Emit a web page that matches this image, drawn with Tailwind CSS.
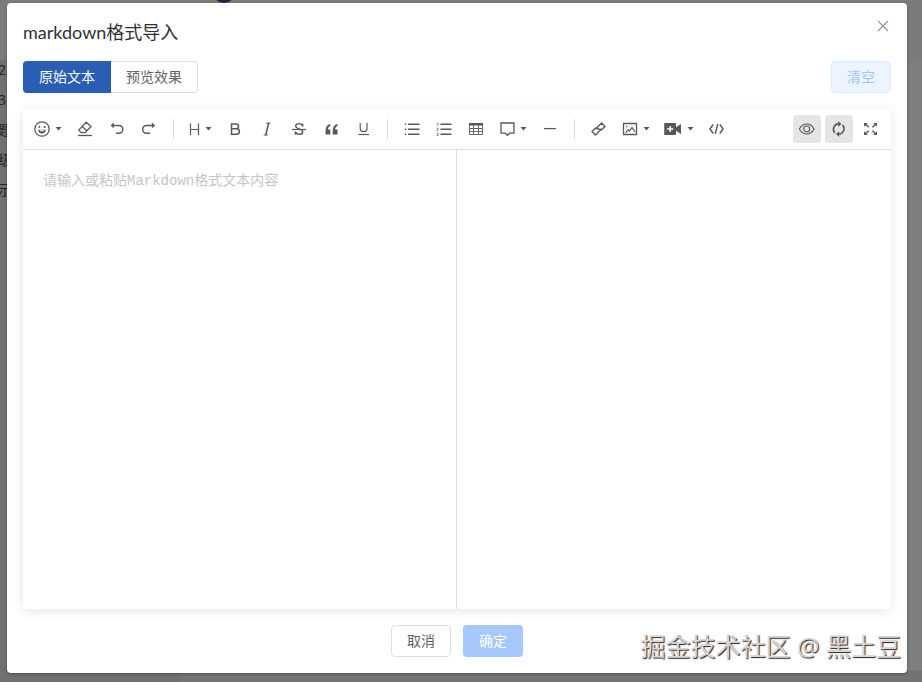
<!DOCTYPE html>
<html lang="zh-CN">
<head>
<meta charset="utf-8">
<meta name="viewport" content="width=device-width, initial-scale=1">
<title>markdown格式导入</title>
<script src="https://cdn.jsdelivr.net/npm/@tailwindcss/browser@4"></script>
</head>
<body class="relative h-screen overflow-hidden bg-[#7e7e7e] font-['Open_Sans','Noto_Sans_CJK_SC',sans-serif] text-sm text-[#606266]">

<!-- dimmed page behind the dialog -->
<div aria-hidden="true" class="absolute inset-0 overflow-hidden text-[#222326]">
  <div class="absolute inset-y-0 left-0 w-[180px] bg-[#6f7072]"></div>
  <div class="absolute inset-x-0 top-0 h-[60px] bg-[#7b7b7c]"></div>
  <div class="absolute inset-x-0 bottom-0 left-[180px] h-[12px] bg-[#737373]"></div>
  <div class="absolute -top-[19px] left-[213px] size-[22px] rounded-full bg-[#17294a]"></div>
  <div class="absolute top-[55px] -left-0.5 flex flex-col leading-[30px] whitespace-nowrap">
    <span>2</span><span>3</span><span>题</span><span>级标</span><span>示</span>
  </div>
</div>

<div class="relative flex h-full pt-[3px] pr-[15px] pb-[9px] pl-[7px]">
<section role="dialog" aria-labelledby="title" class="flex min-w-0 flex-1 flex-col rounded bg-white p-4 shadow-[0_1px_3px_rgba(0,0,0,0.3)]">
  <header class="flex h-[26px] items-center justify-between">
    <h1 id="title" class="font-['Lato','Noto_Sans_CJK_SC',sans-serif] text-lg leading-6 text-[#303133]">markdown格式导入</h1>
    <button type="button" aria-label="关闭" class="flex size-4 -translate-y-1.5 items-center justify-center text-[#909399]">
      <svg class="size-3" viewBox="0 0 12 12" fill="none" stroke="currentColor" stroke-width="1.1"><path d="M1 1l10 10M11 1L1 11"/></svg>
    </button>
  </header>

  <div class="mt-4 flex items-center justify-between">
    <div class="flex">
      <button type="button" class="h-8 w-[88px] rounded-l bg-[#2a5db4] text-white">原始文本</button>
      <button type="button" class="h-8 w-[87px] rounded-r border border-l-0 border-[#dcdfe6] bg-white">预览效果</button>
    </div>
    <button type="button" class="h-8 w-[60px] rounded border border-[#d9ecff] bg-[#ecf5ff] text-[#a3c5f5]">清空</button>
  </div>

  <div class="mt-4 flex min-h-0 flex-1 flex-col rounded shadow-[0_2px_12px_rgba(0,0,0,0.1)]">
    <div role="toolbar" aria-label="编辑工具" class="flex h-[41px] items-center justify-between border-b border-[#dddddd] px-1.5 text-[#595959]">
      <div class="flex items-center gap-1">
        <button type="button" aria-label="表情" class="flex h-7 items-center gap-[5px] px-[5px]">
          <svg class="size-4" viewBox="0 0 16 16" fill="none" stroke="currentColor" stroke-width="1.3"><circle cx="8" cy="8" r="7.200"/><path d="M4.300 8.800h7.400a3.700 3.700 0 0 1-7.400 0z" fill="currentColor" stroke="none"/><path d="M6 9.200h4v1H6z" fill="#fff" stroke="none"/><circle cx="5.400" cy="6" r="1" fill="currentColor" stroke="none"/><circle cx="10.600" cy="6" r="1" fill="currentColor" stroke="none"/></svg>
          <svg class="h-1 w-[7px]" viewBox="0 0 7 4" fill="currentColor"><path d="M.5 0h6L3.500 3.500z"/></svg>
        </button>
        <button type="button" aria-label="清除格式" class="flex size-7 items-center justify-center">
          <svg class="size-4" viewBox="0 0 16 16" fill="none" stroke="currentColor" stroke-width="1.300" stroke-linejoin="round"><path d="M9.200 1.200l4.900 4.300-6.200 6.200H4.400L1.700 9.100zM5.200 5.600l4.900 4.300"/><path d="M1 14.500h14"/></svg>
        </button>
        <button type="button" aria-label="撤销" class="flex size-7 items-center justify-center">
          <svg class="size-4" viewBox="0 0 16 16" fill="none" stroke="currentColor" stroke-width="1.500"><path d="M3.500 4.400h6.400a3.900 3.900 0 0 1 0 7.900H7"/><path d="M1.500 4.400L4.800 1.600v5.600z" fill="currentColor" stroke="none"/></svg>
        </button>
        <button type="button" aria-label="重做" class="flex size-7 items-center justify-center">
          <svg class="size-4" viewBox="0 0 16 16" fill="none" stroke="currentColor" stroke-width="1.500"><path d="M11.500 4.400H5.600a3.900 3.900 0 0 0 0 7.900H9"/><path d="M14.200 4.400L10.900 1.600v5.600z" fill="currentColor" stroke="none"/></svg>
        </button>
        <span class="mx-1.5 h-5 w-px bg-[#d9d9d9]"></span>
        <button type="button" aria-label="标题" class="flex h-7 items-center gap-[5px] px-[5px]">
          <svg class="h-4 w-[11px]" viewBox="0 0 11 16" fill="none" stroke="currentColor" stroke-width="1.200"><path d="M1.500 2.500v11.500M9.500 2.500v11.500M1.500 8.500h8"/></svg>
          <svg class="h-1 w-[7px]" viewBox="0 0 7 4" fill="currentColor"><path d="M.5 0h6L3.500 3.500z"/></svg>
        </button>
        <button type="button" aria-label="粗体" class="flex size-7 items-center justify-center">
          <svg class="size-4" viewBox="0 0 16 16" fill="none" stroke="currentColor" stroke-width="1.500"><path d="M4.500 3h4.600a2.400 2.400 0 0 1 0 4.800H4.500M4.500 7.800h5.200a2.700 2.700 0 0 1 0 5.400H4.500M4.500 2.200V14"/></svg>
        </button>
        <button type="button" aria-label="斜体" class="flex size-7 items-center justify-center">
          <svg class="size-4" viewBox="0 0 16 16" fill="none" stroke="currentColor"><path d="M9.600 2L6.800 14" stroke-width="1.500"/><path d="M7.300 2.200h4.200M4.700 14h4.200" stroke-width="1"/></svg>
        </button>
        <button type="button" aria-label="删除线" class="flex size-7 items-center justify-center">
          <svg class="size-4" viewBox="0 0 16 16" fill="none" stroke="currentColor" stroke-width="1.400"><path d="M11.700 5.600V2.800M11.300 4.600C10.600 3.200 9.400 2.600 8 2.600c-2 0-3.300 1-3.300 2.500C4.700 6.800 6.300 7.400 8.200 7.900c2.200.600 3.500 1.300 3.500 3 0 1.600-1.500 2.500-3.500 2.500-1.700 0-2.900-.700-3.700-2.200M4.300 10.500v2.900"/><path d="M1 8.500h14" stroke-width="1.200"/></svg>
        </button>
        <button type="button" aria-label="引用" class="flex size-7 items-center justify-center">
          <svg class="size-4" viewBox="0 0 16 16" fill="currentColor"><path d="M7.300 3C4 3.800 2.500 6 2.500 9.800V13.500h4.800V8.400H5c.1-1.700.8-2.700 2.300-3.300zM14.500 3C11.200 3.800 9.700 6 9.700 9.800V13.500h4.800V8.400h-2.300c.1-1.700.8-2.700 2.300-3.300z"/></svg>
        </button>
        <button type="button" aria-label="下划线" class="flex size-7 items-center justify-center">
          <svg class="size-4" viewBox="0 0 16 16" fill="none" stroke="currentColor" stroke-width="1.200"><path d="M5.200 2v5.200a3.400 3.400 0 0 0 6.800 0V2"/><path d="M3.500 13.500H14"/></svg>
        </button>
        <span class="mx-1.5 h-5 w-px bg-[#d9d9d9]"></span>
        <button type="button" aria-label="无序列表" class="flex size-7 items-center justify-center">
          <svg class="size-4" viewBox="0 0 16 16" fill="none" stroke="currentColor" stroke-width="1.500"><path d="M4 3.200h11.500M4 8.200h11.500M4 13.200h11.500M.8 3.200h1.500M.8 8.200h1.500M.8 13.200h1.500"/></svg>
        </button>
        <button type="button" aria-label="有序列表" class="flex size-7 items-center justify-center">
          <svg class="size-4" viewBox="0 0 16 16" fill="none" stroke="currentColor" stroke-width="1.500"><path d="M4.500 3.200h11M4.500 8.200h11M4.500 13.200h11"/><path d="M1 2.200h1v2.600M.8 7h1.400L.8 9.300h1.500M.8 12h1.400v2.500H.8" stroke-width=".7"/></svg>
        </button>
        <button type="button" aria-label="表格" class="flex size-7 items-center justify-center">
          <svg class="size-4" viewBox="0 0 16 16" fill="none" stroke="currentColor" stroke-width=".9"><path d="M1 2h14v2.500H1z" fill="currentColor" stroke="none"/><path d="M1.500 3v10.500h13V3M1.500 7.500h13M1.500 10.500h13M5.500 4v9.500M10.500 4v9.500"/></svg>
        </button>
        <button type="button" aria-label="提示" class="flex h-7 items-center gap-[5px] px-[5px]">
          <svg class="size-4" viewBox="0 0 16 16" fill="none" stroke="currentColor" stroke-width="1.300"><path d="M2 2h13v10.200h-4.300L8.500 14.300l-2.200-2.100H2z"/></svg>
          <svg class="h-1 w-[7px]" viewBox="0 0 7 4" fill="currentColor"><path d="M.5 0h6L3.500 3.500z"/></svg>
        </button>
        <button type="button" aria-label="分割线" class="flex size-7 items-center justify-center">
          <svg class="size-4" viewBox="0 0 16 16" fill="none" stroke="currentColor" stroke-width="1.300"><path d="M2 7.600h12"/></svg>
        </button>
        <span class="mx-1.5 h-5 w-px bg-[#d9d9d9]"></span>
        <button type="button" aria-label="链接" class="flex size-7 items-center justify-center">
          <svg class="size-4" viewBox="0 0 16 16" fill="none" stroke="currentColor" stroke-width="1.400" stroke-linejoin="round"><path d="M7.600 8.600L5.800 6.800l4.800-4.800 3.400 3.400-3.600 3.600-1.200-1.200"/><path d="M7.400 7.400l1.800 1.800L4.400 14 1 10.600 4.600 7l1.200 1.200"/></svg>
        </button>
        <button type="button" aria-label="图片" class="flex h-7 items-center gap-[5px] px-[5px]">
          <svg class="size-4" viewBox="0 0 16 16" fill="none" stroke="currentColor" stroke-width="1.300"><path d="M1.500 2.500h13v11h-13z"/><path d="M3.500 11.800l2.800-3 1.200 1.200 2.500-3.500 3 4.300" stroke-width="1.200"/><circle cx="4.700" cy="5.500" r=".8" fill="currentColor" stroke="none"/></svg>
          <svg class="h-1 w-[7px]" viewBox="0 0 7 4" fill="currentColor"><path d="M.5 0h6L3.500 3.500z"/></svg>
        </button>
        <button type="button" aria-label="视频" class="flex h-7 items-center gap-[5px] px-[5px]">
          <svg class="h-4 w-[18px]" viewBox="0 0 18 16" fill="currentColor"><path d="M1 2h10.200q.8 0 .8.800v3.400L17 3v10l-5-3.200v3.400q0 .8-.8.800H1q-.8 0-.8-.8V2.800q0-.8.8-.8z"/><path d="M6.200 5v6M3.200 8h6" stroke="#fff" stroke-width="1.400"/></svg>
          <svg class="h-1 w-[7px]" viewBox="0 0 7 4" fill="currentColor"><path d="M.5 0h6L3.500 3.500z"/></svg>
        </button>
        <button type="button" aria-label="代码" class="flex size-7 items-center justify-center">
          <svg class="size-4" viewBox="0 0 16 16" fill="none" stroke="currentColor" stroke-width="1.400"><path d="M4.200 3.500L.9 8l3.300 4.500M10.800 3.500L14.100 8l-3.300 4.500M8.800 3L6.200 13"/></svg>
        </button>
      </div>
      <div class="flex items-center gap-1">
        <button type="button" aria-label="预览" aria-pressed="true" class="flex size-7 items-center justify-center rounded-sm bg-[#e5e5e5]">
          <svg class="size-4" viewBox="0 0 16 16" fill="none" stroke="currentColor" stroke-width="1.100"><path d="M.3 8C2.100 4.700 4.700 3 7.700 3s5.600 1.700 7.400 5c-1.800 3.300-4.400 5-7.400 5S2.100 11.300.3 8z"/><circle cx="7.700" cy="8" r="3"/></svg>
        </button>
        <button type="button" aria-label="同步滚动" aria-pressed="true" class="flex size-7 items-center justify-center rounded-sm bg-[#e5e5e5]">
          <svg class="size-4" viewBox="0 0 16 16" fill="none" stroke="currentColor" stroke-width="1.600"><path d="M3.900 12A5.400 5.400 0 0 1 7.500 2.900M11.500 4A5.400 5.400 0 0 1 7.900 13.100"/><path d="M7.200 0l3.200 2.900-3.200 2.900zM8.200 16l-3.200-2.900 3.200-2.900z" fill="currentColor" stroke="none"/></svg>
        </button>
        <button type="button" aria-label="全屏" class="flex size-7 items-center justify-center">
          <svg class="size-4" viewBox="0 0 16 16" fill="none" stroke="currentColor" stroke-width="1.400"><path d="M2 3l3.700 3.300M13 3L9.300 6.300M2 13l3.700-3.300M13 13L9.300 9.700"/><path d="M1 2h4L1 5.800zM14 2h-4l4 3.800zM1 14h4l-4-3.800zM14 14h-4l4-3.800z" fill="currentColor" stroke="none"/></svg>
        </button>
      </div>
    </div>
    <div class="grid min-h-0 flex-1 grid-cols-2">
      <textarea aria-label="Markdown文本" placeholder="请输入或粘贴Markdown格式文本内容" class="resize-none border-r border-[#dddddd] px-5 py-5 font-['Liberation_Mono','Noto_Sans_CJK_SC',monospace] text-sm leading-[22px] outline-none placeholder:text-[#c3c5ca]"></textarea>
      <div aria-label="预览"></div>
    </div>
  </div>

  <footer class="mt-4 flex justify-center gap-3">
    <button type="button" class="h-8 w-[60px] rounded border border-[#dcdfe6] bg-white">取消</button>
    <button type="button" class="h-8 w-[60px] rounded bg-[#a6c8ff] text-white">确定</button>
  </footer>
</section>
</div>

<div class="absolute right-[21px] bottom-[18px] text-[25px] leading-9 whitespace-nowrap text-[#d6d6d6] [text-shadow:1px_1px_1px_#222]">掘金技术社区 @ 黑土豆</div>
</body>
</html>
